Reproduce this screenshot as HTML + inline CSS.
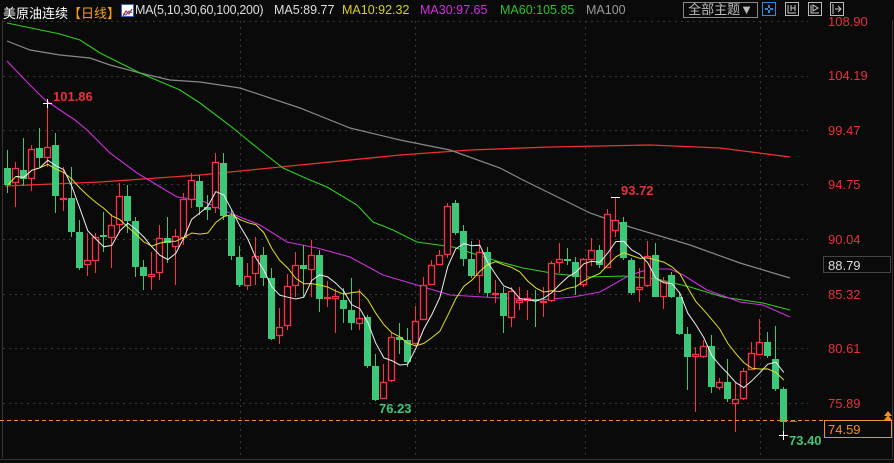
<!DOCTYPE html>
<html><head><meta charset="utf-8"><style>
html,body{margin:0;padding:0;background:#0a0a0a;width:894px;height:463px;overflow:hidden}
body{position:relative;font-family:"Liberation Sans","Noto Sans CJK SC",sans-serif}
.t{position:absolute;font-size:12.5px;white-space:nowrap;top:3px}
.ax{position:absolute;left:828px;font-size:13px;color:#e8303c}
</style></head><body>
<svg id="s" width="894" height="463" style="position:absolute;left:0;top:0"></svg>
<div class="t" style="left:3px;color:#fff;font-size:13px">美原油连续</div>
<div class="t" style="left:68px;color:#f0a020;font-size:13px">【日线】</div>
<div style="position:absolute;left:121px;top:4px;width:11px;height:11px;background:#fff;border:1px solid #4060c0"><svg width="11" height="11"><polyline points="1,9 4,4 7,7 10,2" fill="none" stroke="#d03030" stroke-width="1.3"/><polyline points="1,7 4,8 7,4 10,6" fill="none" stroke="#3050c0" stroke-width="1"/></svg></div>
<div class="t" style="left:135px;color:#ddd;letter-spacing:-0.3px">MA(5,10,30,60,100,200)</div>
<div class="t" style="left:274px;color:#ddd">MA5:89.77</div>
<div class="t" style="left:342px;color:#d8d020">MA10:92.32</div>
<div class="t" style="left:420px;color:#d030e0">MA30:97.65</div>
<div class="t" style="left:500px;color:#30c030">MA60:105.85</div>
<div class="t" style="left:586px;color:#999">MA100</div>
<div style="position:absolute;left:683px;top:2px;width:73px;height:14px;border:1px solid #888;color:#bbb;font-size:13px;line-height:14px;text-align:center">全部主题▼</div>
<div class="ax" style="top:14px">108.90</div>
<div class="ax" style="top:68px">104.19</div>
<div class="ax" style="top:123px">99.47</div>
<div class="ax" style="top:177px">94.75</div>
<div class="ax" style="top:232px">90.04</div>
<div class="ax" style="top:287px">85.32</div>
<div class="ax" style="top:341px">80.61</div>
<div class="ax" style="top:396px">75.89</div>
<div style="position:absolute;left:823px;top:256px;width:68px;height:17px;border:1px solid #444;color:#ddd;font-size:13px;line-height:17px;padding-left:4px;box-sizing:border-box">88.79</div>
<div style="position:absolute;left:824px;top:420px;width:68px;height:18px;border:1px solid #f0902a;color:#f0902a;font-size:13px;line-height:18px;padding-left:3px;box-sizing:border-box">74.59</div>
<div style="position:absolute;left:53px;top:89px;font-size:13px;font-weight:bold;color:#e8303c">101.86</div>
<div style="position:absolute;left:621px;top:183px;font-size:13px;font-weight:bold;color:#e8303c">93.72</div>
<div style="position:absolute;left:379px;top:401px;font-size:13px;font-weight:bold;color:#3cc878">76.23</div>
<div style="position:absolute;left:789px;top:433px;font-size:13px;font-weight:bold;color:#3cc878">73.40</div>
<script>
var C=[
['g',168,185,150,193],['r',168,182,162,207],['g',170,179,138,186],['r',149,178,145,191],['g',148,158,128,167],['r',147,157,103,167],['g',145,196,133,213],['r',198,199,167,211],['g',198,232,167,237],['g',232,268,220,270],
['r',260,264,233,276],['r',237,260,233,273],['g',235,237,212,252],['r',225,237,214,268],['r',196,224,183,233],['g',196,221,185,233],['g',221,267,217,277],['g',267,276,260,290],['r',274,276,252,290],['r',238,272,225,280],
['g',238,243,217,263],['r',236,246,229,285],['r',199,237,193,245],['r',180,199,173,208],['g',181,207,175,215],['g',207,210,195,220],['r',162,207,153,213],['g',163,216,153,220],['g',216,256,210,260],['g',257,285,246,287],
['r',276,285,263,290],['r',256,273,237,285],['g',255,278,247,286],['g',278,339,268,340],['r',327,335,308,344],['r',286,325,274,330],['r',265,285,252,297],['g',265,269,245,297],['r',255,269,240,297],['g',255,299,250,312],
['r',297,298,281,307],['r',296,298,289,333],['g',300,309,288,323],['g',310,323,278,330],['r',318,323,289,330],['g',317,366,315,368],['g',366,400,354,401],['r',382,398,364,398],['r',337,380,332,382],['g',337,340,323,354],
['g',340,362,328,367],['r',321,343,306,345],['r',285,319,277,320],['r',265,284,260,285],['r',255,264,250,265],['r',206,254,203,258],['g',203,233,200,235],['g',231,259,225,266],['g',259,276,241,278],['r',252,275,240,293],
['g',252,293,247,297],['r',293,294,280,303],['g',293,316,287,333],['r',291,317,287,327],['r',300,302,287,310],['r',298,300,290,320],['g',299,301,290,327],['r',301,302,287,317],['r',263,300,261,302],['r',259,262,243,273],
['g',259,261,248,265],['g',262,277,257,295],['r',259,284,258,287],['r',250,259,238,266],['g',250,265,245,268],['r',214,267,209,268],['r',220,230,197,237],['g',222,258,217,260],['g',260,293,258,295],['r',287,289,268,302],
['r',256,285,241,287],['g',255,297,243,297],['r',281,296,277,309],['g',275,297,272,298],['g',297,334,293,335],['g',334,357,327,390],['r',354,356,347,412],['r',346,356,340,358],['g',346,387,335,393],['r',382,387,378,390],
['g',382,399,359,402],['r',399,403,383,432],['r',371,398,368,400],['r',353,369,342,370],['r',342,354,319,355],['g',342,356,332,358],['g',359,389,326,391],['g',389,422,387,435]];
var h='';
function pl(pts,c,w){return '<polyline points="'+pts.join(' ')+'" fill="none" stroke="'+c+'" stroke-width="'+(w||1)+'"/>';}
[21,76,130,184,239,294,348,403].forEach(function(y){h+='<line x1="3" y1="'+(y+0.5)+'" x2="808" y2="'+(y+0.5)+'" stroke="#383838" stroke-dasharray="2,4"/>';});
[240,415,585,760].forEach(function(x){h+='<line x1="'+(x+0.5)+'" y1="21" x2="'+(x+0.5)+'" y2="458" stroke="#383838" stroke-dasharray="2,4"/>';});
h+='<line x1="2.5" y1="20" x2="2.5" y2="458" stroke="#333"/>';
h+='<line x1="892.5" y1="20" x2="892.5" y2="458" stroke="#333"/>';
h+='<line x1="0" y1="459.5" x2="894" y2="459.5" stroke="#333"/>';
h+=pl(['5,186','100,182','200,175','300,165','400,155','470,150','550,147','650,145','720,148','790,157'],'#f03030',1.3);
h+=pl(['7,41','30,50','60,55','90,58','110,65','140,73','170,80','200,82','240,88','300,108','350,128','400,140','450,150','500,168','523,180','590,213','630,227','690,245','740,263','790,278'],'#888',1.2);
h+=pl(['7,23','60,34','80,40','100,53','140,73','180,90','200,103','233,128','250,142','260,150','283,168','310,180','327,187','357,205','373,222','393,230','417,242','453,247','487,258','500,262','523,268','557,274','590,277','623,276','657,279','690,287','723,297','763,303','790,310'],'#30d020',1.1);
h+=pl(['7,61','25,80','45,100','60,110','75,120','87,130','110,153','137,173','177,197','200,200','230,213','260,225','287,242','317,248','350,257','383,275','417,285','450,295','500,298','540,300','573,297','600,292','630,275','650,269','670,269','683,275','707,290','740,302','763,305','790,317'],'#d030e0',1.1);
var cl=[];
C.forEach(function(c,k){var x=Math.round(7.3+8*k);var col=c[0]=='r'?'#ff3048':'#3cc878';
h+='<line x1="'+(x+0.5)+'" y1="'+c[3]+'" x2="'+(x+0.5)+'" y2="'+c[4]+'" stroke="'+col+'"/>';
var bh=Math.max(c[2]-c[1],1);
if(c[0]=='r')h+='<rect x="'+(x-2.5)+'" y="'+(c[1]+0.5)+'" width="6" height="'+bh+'" fill="#0a0a0a" stroke="'+col+'" stroke-width="1.3"/>';
else h+='<rect x="'+(x-3)+'" y="'+c[1]+'" width="7" height="'+bh+'" fill="'+col+'"/>';
cl.push(c[0]=='r'?c[1]:c[2]);});
function ma(n){var p=[];for(var k=0;k<cl.length;k++){var s=0,m=0;for(var j=Math.max(0,k-n+1);j<=k;j++){s+=cl[j];m++;}p.push((7.8+8*k)+','+(s/m).toFixed(1));}return p;}
h+=pl(ma(10),'#e0e020',1);
h+=pl(ma(5).slice(1),'#eee',1);
h+='<line x1="43" y1="103.5" x2="52" y2="103.5" stroke="#fff"/><line x1="47.5" y1="99" x2="47.5" y2="108" stroke="#fff"/>';
h+='<line x1="611" y1="197.5" x2="620" y2="197.5" stroke="#fff"/>';
h+='<line x1="779" y1="435.5" x2="788" y2="435.5" stroke="#fff"/><line x1="783.5" y1="431" x2="783.5" y2="440" stroke="#fff"/>';
h+='<line x1="0" y1="420.5" x2="824" y2="420.5" stroke="#f0902a" stroke-dasharray="4,3"/>';
h+='<line x1="790" y1="421.5" x2="797" y2="421.5" stroke="#ff3048"/>';
h+='<polygon points="888,411 884,416 892,416" fill="#f0902a"/><polygon points="888,415 884,420 892,420" fill="#f0902a"/>';
h+='<rect x="762.5" y="2.5" width="13" height="13" fill="none" stroke="#2a8ae0"/><g fill="#2a8ae0"><rect x="768" y="5" width="2" height="3"/><rect x="768" y="10" width="2" height="3"/><rect x="765" y="8" width="3" height="2"/><rect x="770" y="8" width="3" height="2"/></g>';
[785,808,830].forEach(function(x,i){h+='<rect x="'+(x+0.5)+'" y="2.5" width="13" height="13" fill="none" stroke="#bbb"/>';
if(i==0)h+='<path d="M'+(x+3)+' 5v8h8M'+(x+6)+' 5v6M'+(x+10)+' 5v6M'+(x+6)+' 8h4" stroke="#ccc" fill="none"/>';
if(i==1)h+='<path d="M'+(x+3)+' 5v8h8M'+(x+5)+' 5l5 3l-5 3z" stroke="#ccc" fill="none"/>';
if(i==2)h+='<path d="M'+(x+3)+' 4v10M'+(x+5)+' 9h5M'+(x+8)+' 6l3 3l-3 3" stroke="#ccc" fill="none"/>';});
document.getElementById('s').innerHTML=h;
</script>
</body></html>
